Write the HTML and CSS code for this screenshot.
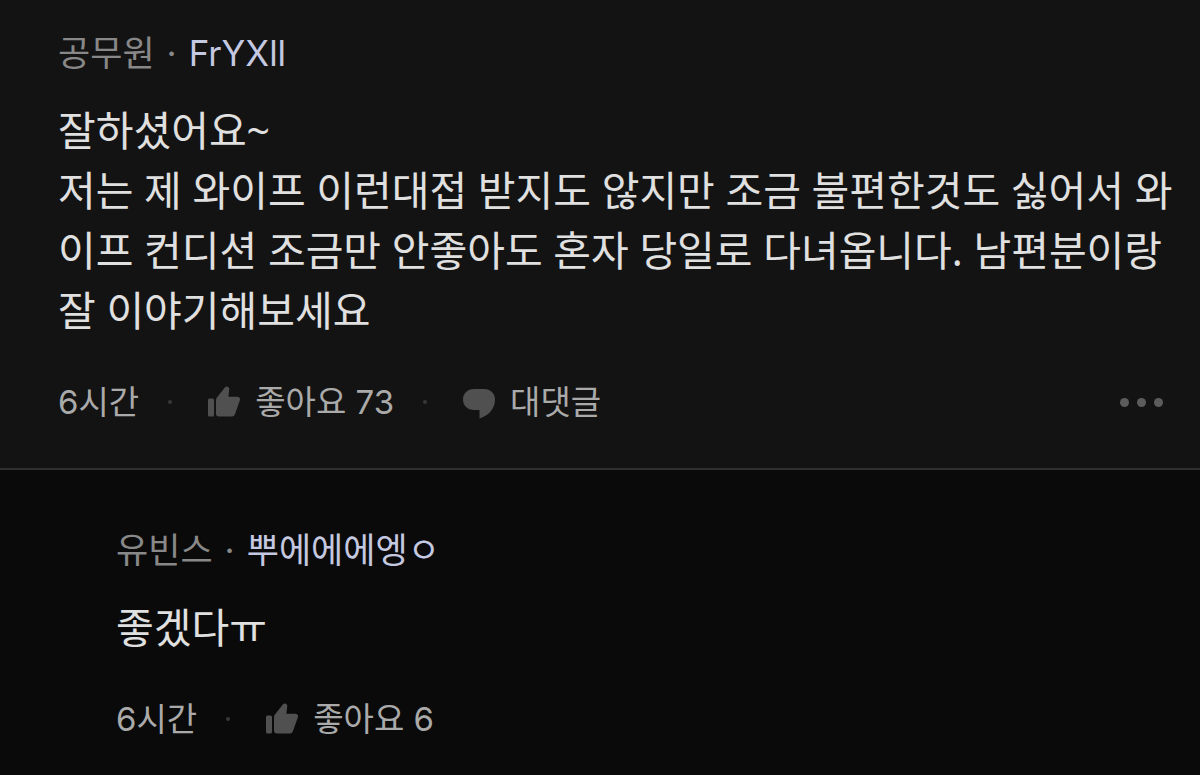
FILE: index.html
```html
<!DOCTYPE html>
<html lang="ko">
<head>
  <meta charset="UTF-8">
  <meta name="viewport" content="width=device-width, initial-scale=1">
  <title>댓글</title>
  <link rel="stylesheet" href="styles.css">
</head>
<body>

  <svg class="sprite" aria-hidden="true">
    <symbol id="icon-like" viewBox="0 0 32 32">
      <path d="M1.500 12.500h3a1.500 1.500 0 0 1 1.500 1.500v15a1.500 1.500 0 0 1-1.500 1.500h-3a1.500 1.500 0 0 1-1.500-1.500V14a1.500 1.500 0 0 1 1.500-1.500z"/>
      <path d="M8 14.500c0-1.500.4-2.400 1.400-3.400l7.600-9.800c1.300-1.700 4.300-.9 4.300 1.700l-.9 7.800h8.900c2.200 0 3.200 1.800 2.500 3.800l-4.600 13C26.500 29.700 25.700 30.500 24 30.500H11c-2 0-3-1-3-3z"/>
    </symbol>
    <symbol id="icon-reply" viewBox="0 -4 32 34">
      <path d="M11 0h10c6.500 0 11 4.500 11 10.500C32 20 25 27 16.500 29.500V21H11C4.500 21 0 16.500 0 10.500S4.500 0 11 0z"/>
    </symbol>
  </svg>

  <article class="comment">
    <div class="author">
      <span class="company">공무원</span>
      <span class="sep">·</span>
      <a class="nickname" href="#">FrYXll</a>
    </div>
    <p class="text">잘하셨어요~<br>저는 제 와이프 이런대접 받지도 않지만 조금 불편한것도 싫어서 와이프 컨디션 조금만 안좋아도 혼자 당일로 다녀옵니다. 남편분이랑 잘 이야기해보세요</p>
    <div class="meta">
      <span class="time">6시간</span>
      <span class="dot"></span>
      <button class="action" type="button">
        <svg class="icon like" aria-hidden="true"><use href="#icon-like"/></svg>
        좋아요 73
      </button>
      <span class="dot"></span>
      <button class="action" type="button">
        <svg class="icon bubble" aria-hidden="true"><use href="#icon-reply"/></svg>
        대댓글
      </button>
      <button class="more" type="button" aria-label="더보기">
        <span></span><span></span><span></span>
      </button>
    </div>
  </article>

  <article class="comment reply">
    <div class="author">
      <span class="company">유빈스</span>
      <span class="sep">·</span>
      <a class="nickname" href="#">뿌에에에엥ㅇ</a>
    </div>
    <p class="text">좋겠다ㅠ</p>
    <div class="meta">
      <span class="time">6시간</span>
      <span class="dot"></span>
      <button class="action" type="button">
        <svg class="icon like" aria-hidden="true"><use href="#icon-like"/></svg>
        좋아요 6
      </button>
    </div>
  </article>

</body>
</html>
```

FILE: styles.css
```css
* {
  box-sizing: border-box;
}
body {
  margin: 0;
  background-color: #0a0a0a;
  color: #e0e0e0;
  font-family: Inter, "Noto Sans CJK KR", sans-serif;
  font-weight: 400;
}
.sprite {
  display: none;
}
.comment {
  padding: 29px 24px 38px 58px;
  background-color: #131313;
  border-bottom: 2px solid #303030;
}
.reply {
  padding-top: 56px;
  padding-left: 116px;
  background-color: #0a0a0a;
  border-bottom: none;
}
.author {
  display: flex;
  gap: 12px;
  font-size: 35px;
  line-height: 48px;
}
.company,
.sep {
  color: #888;
}
.nickname {
  color: #c4c8e0;
  text-decoration: none;
}
.text {
  margin: 23px 0 34px;
  font-family: "Noto Sans", "Noto Sans CJK KR", sans-serif;
  font-size: 41px;
  line-height: 60px;
  word-break: break-all;
}
.meta {
  display: flex;
  align-items: center;
  color: #aaa;
  font-size: 33px;
  line-height: 56px;
}
.dot {
  width: 4px;
  height: 4px;
  margin: 0 36px 0 29px;
  border-radius: 50%;
  background-color: #383838;
}
.action {
  display: flex;
  align-items: center;
  gap: 15px;
  padding: 0;
  border: none;
  background: none;
  color: inherit;
  font: inherit;
  cursor: pointer;
}
.icon {
  width: 32px;
  fill: #505050;
}
.like {
  height: 32px;
}
.bubble {
  height: 34px;
}
.more {
  display: flex;
  gap: 8px;
  margin-left: auto;
  padding: 13px;
  border: none;
  background: none;
  cursor: pointer;
}
.more span {
  width: 9px;
  height: 9px;
  border-radius: 50%;
  background-color: #5c5c5c;
}
```
